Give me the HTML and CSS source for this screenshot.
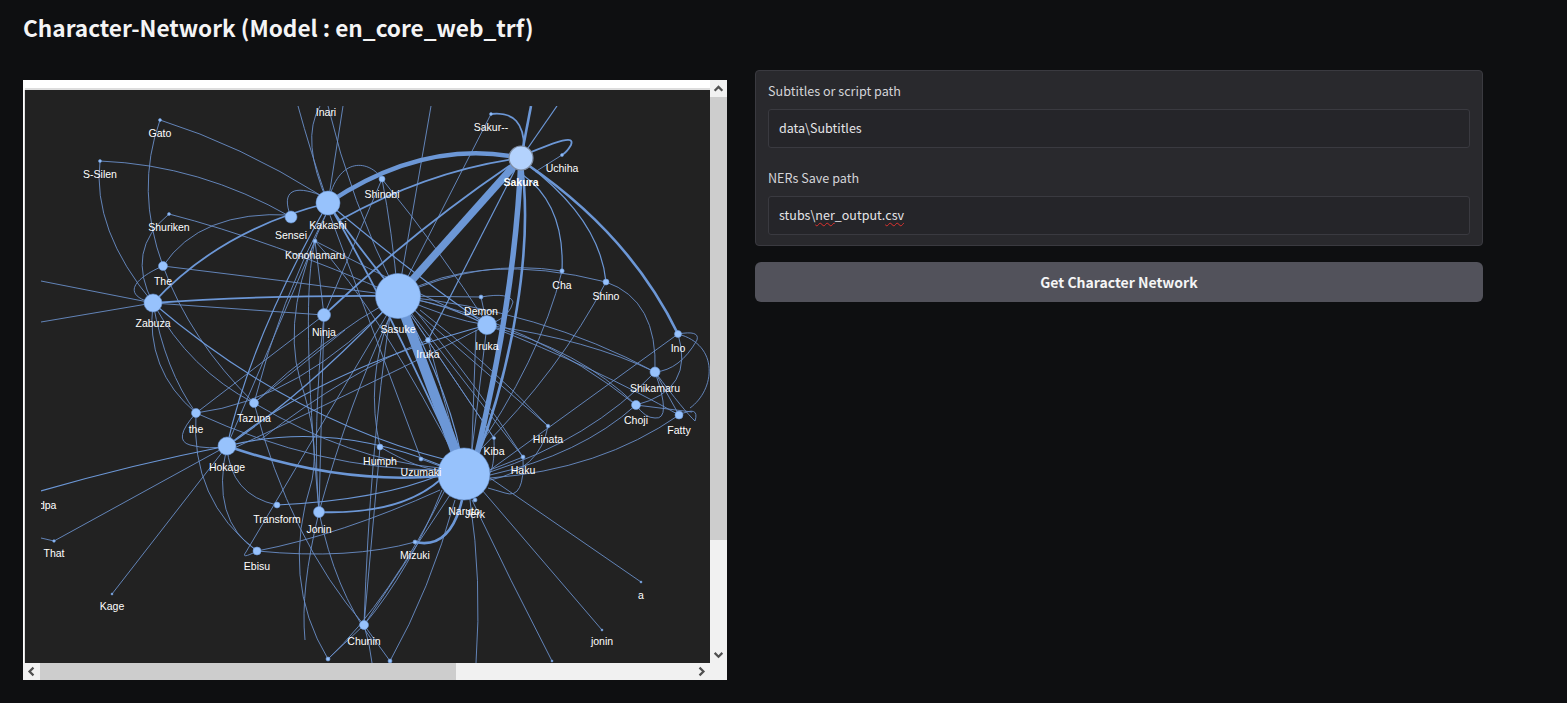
FILE: index.html
```html
<!DOCTYPE html>
<html lang="en">
<head>
<meta charset="utf-8">
<title>Character-Network</title>
<link rel="stylesheet" href="styles.css">
</head>
<body>
<header class="title-bar"><h1 class="title">Character-Network (Model : en_core_web_trf)</h1></header>
<main class="columns">
  <section class="frame">
    <div class="viewport">
      <svg class="graph" viewBox="25 90 685 573" width="685" height="573" xmlns="http://www.w3.org/2000/svg">
        <defs><clipPath id="stage"><rect x="41" y="106" width="669" height="557"/></clipPath></defs>
        <g clip-path="url(#stage)">
          <g class="edges e1">
            <path d="M160 120Q240 145 320 195"/><path d="M160 120Q135 190 163 266"/><path d="M100 161Q200 165 291 217"/><path d="M100 161Q92 230 153 303"/>
            <path d="M169 214Q270 240 398 296"/><path d="M169 214Q125 250 153 303"/><path d="M163 266Q200 210 291 215"/><path d="M163 266Q280 280 398 296"/>
            <path d="M163 266C135 278 120 295 153 303"/><path d="M153 303L41 281"/><path d="M153 303L41 322"/><path d="M153 303Q145 370 196 413"/>
            <path d="M153 303Q165 370 196 413"/><path d="M163 266Q190 340 254 403"/><path d="M153 303Q190 370 254 403"/><path d="M153 303L324 315"/>
            <path d="M328 203Q310 150 298 106"/><path d="M328 203Q300 140 320 106"/><path d="M343 106L328 203"/><path d="M328 106Q350 200 398 296"/><path d="M431 106L398 296"/>
            <path d="M328 203C338 155 370 160 382 179"/><path d="M291 217C280 190 295 185 320 195"/><path d="M382 179Q440 250 488 325"/><path d="M382 179Q392 230 398 296"/><path d="M382 179L324 315"/>
            <path d="M491 114L398 296"/><path d="M562 155L535 172"/><path d="M562 271Q480 258 398 296"/><path d="M606 282Q480 250 398 296"/><path d="M606 282Q658 300 655 372"/>
            <path d="M562 271Q540 360 470 460"/><path d="M606 282Q560 370 480 450"/><path d="M481 297Q510 292 513 302Q510 315 495 322"/><path d="M481 297L398 296"/><path d="M481 297L487 325"/>
            <path d="M398 296Q540 310 655 372"/><path d="M398 296Q530 320 636 405"/><path d="M487 325Q590 340 655 372"/><path d="M487 325Q580 350 636 405"/><path d="M487 325Q600 370 679 415"/>
            <path d="M398 296Q450 305 487 325"/><path d="M398 296Q450 320 487 325"/><path d="M398 296L548 426"/><path d="M398 296L523 457"/><path d="M398 296L494 438"/>
            <path d="M490 470L678 334"/><path d="M490 472Q590 440 655 372"/><path d="M490 475Q580 455 636 405"/><path d="M490 478Q600 470 679 415"/>
            <path d="M678 334Q700 330 697 340Q680 370 655 372"/><path d="M678 334C720 345 715 390 690 408"/><path d="M678 334Q695 390 636 405"/><path d="M655 372L679 415"/>
            <path d="M655 372Q672 420 655 418Q645 418 636 405"/><path d="M636 405L692 412"/><path d="M679 415Q700 405 695 421Q685 412 655 372"/>
            <path d="M490 478L641 582"/><path d="M482 490L602 630"/><path d="M472 500Q510 580 552 661"/><path d="M470 500Q482 580 476 663"/><path d="M455 500Q430 590 390 661"/>
            <path d="M450 495L364 625"/><path d="M442 490Q410 570 364 625"/><path d="M445 490Q390 600 328 659"/><path d="M257 551Q340 535 440 490"/><path d="M257 551Q350 560 415 542"/>
            <path d="M227 446Q230 495 277 505"/><path d="M227 446Q210 520 257 551"/><path d="M196 413Q190 500 257 551"/><path d="M227 446L54 541"/><path d="M54 541L41 538"/><path d="M227 446L112 594"/>
            <path d="M196 413Q172 440 190 445Q210 450 227 446"/><path d="M196 413Q320 470 440 470"/><path d="M196 413L324 315"/><path d="M196 413Q300 400 398 296"/>
            <path d="M257 551Q240 560 246 552L398 296"/><path d="M254 403Q290 540 364 625"/><path d="M254 403Q350 460 440 468"/><path d="M254 403Q320 340 398 296"/><path d="M254 403L345 330"/><path d="M254 403Q280 300 328 210"/>
            <path d="M319 512L324 315"/><path d="M319 512Q350 400 390 316"/><path d="M319 512Q312 430 324 315"/><path d="M328 659Q280 580 312 480Q320 440 300 380Q280 310 328 210"/><path d="M364 625L328 659"/><path d="M364 625L380 447"/>
            <path d="M364 625Q370 450 390 316"/><path d="M364 625L390 661"/><path d="M364 625Q370 645 372 663"/><path d="M380 447Q365 380 390 316"/><path d="M380 447Q420 470 440 470"/><path d="M421 459L328 210"/><path d="M421 459L445 468"/>
            <path d="M548 426Q485 360 420 310"/><path d="M548 426Q540 470 490 480"/><path d="M494 438L398 296"/><path d="M494 438Q495 470 488 475"/><path d="M523 457Q525 500 505 493Q495 490 488 488"/>
            <path d="M523 457Q480 390 415 310"/><path d="M523 457L490 470"/><path d="M428 340Q350 370 260 440"/><path d="M428 340L464 474"/><path d="M487 325Q400 370 230 450"/>
            <path d="M315 241Q430 300 487 325"/><path d="M315 241Q380 310 464 474"/><path d="M315 241L324 315"/><path d="M315 241Q300 300 319 512"/><path d="M315 241L227 446"/>
            <path d="M319 512Q335 590 372 640"/><path d="M319 512Q300 590 305 640"/><path d="M487 325L472 450"/><path d="M470 500L476 330"/>
          </g>
          <g class="edges e2">
            <path d="M227 446Q130 465 41 491"/><path d="M227 446Q250 340 328 203"/><path d="M227 446Q320 370 487 325"/><path d="M227 446Q310 390 398 296"/><path d="M153 303Q290 420 447 460"/>
            <path d="M277 505Q380 500 440 475"/><path d="M523 175Q565 205 562 271"/><path d="M528 165Q600 220 606 282"/><path d="M521 158L557 106"/><path d="M398 296Q455 400 464 474"/>
            <path d="M227 446Q330 420 440 465"/><path d="M328 203Q420 280 487 325"/><path d="M428 340L515 170"/>
          </g>
          <g class="edges e3">
            <path d="M153 303Q220 230 328 203"/><path d="M153 303Q260 295 398 296"/><path d="M324 315Q420 225 521 158"/><path d="M491 114Q525 110 524 150"/><path d="M524 155C560 140 575 135 571 145Q567 152 562 155"/>
            <path d="M328 203Q345 230 398 296"/><path d="M319 512Q400 515 440 480"/><path d="M328 203Q380 290 455 455"/><path d="M340 220Q430 170 521 158"/>
          </g>
          <g class="edges e4">
            <path d="M528 165Q630 235 678 334"/><path d="M521 158L531 106"/><path d="M227 446Q340 485 440 476"/><path d="M415 542Q450 550 462 500"/><path d="M521 158C535 250 510 370 478 455"/>
          </g>
          <path class="edges e5" d="M328 203Q425 138 521 158"/>
          <path class="edges e6" d="M521 158Q515 300 473 470"/>
          <path class="edges e7" d="M398 296L521 158"/>
          <path class="edges e8" d="M398 296Q425 370 464 474"/>
          <g class="nodes">
            <circle cx="464" cy="474" r="26"/><circle cx="398" cy="296" r="22.5"/><circle class="lit" cx="521" cy="158" r="12"/><circle cx="328" cy="203" r="12"/>
            <circle cx="291" cy="217" r="6"/><circle cx="153" cy="303" r="9"/><circle cx="163" cy="266" r="4.5"/><circle cx="324" cy="315" r="6.5"/>
            <circle cx="487" cy="325" r="9.5"/><circle cx="227" cy="446" r="9"/><circle cx="196" cy="413" r="4.5"/><circle cx="254" cy="403" r="4.5"/>
            <circle cx="655" cy="372" r="5"/><circle cx="636" cy="405" r="4.5"/><circle cx="679" cy="415" r="4"/><circle cx="678" cy="334" r="3.5"/>
            <circle cx="606" cy="282" r="3"/><circle cx="562" cy="271" r="2.2"/><circle cx="319" cy="512" r="5.5"/><circle cx="277" cy="505" r="3"/>
            <circle cx="257" cy="551" r="4"/><circle cx="364" cy="625" r="4.5"/><circle cx="415" cy="542" r="2"/><circle cx="380" cy="447" r="3"/>
            <circle cx="421" cy="459" r="2"/><circle cx="494" cy="438" r="1.6"/><circle cx="523" cy="457" r="2"/><circle cx="548" cy="426" r="1.8"/>
            <circle cx="475" cy="500" r="2"/><circle cx="428" cy="340" r="2.5"/><circle cx="481" cy="297" r="2"/><circle cx="382" cy="179" r="3"/>
            <circle cx="562" cy="155" r="1.5"/><circle cx="491" cy="114" r="1.5"/><circle cx="160" cy="120" r="1.5"/><circle cx="100" cy="161" r="1.5"/>
            <circle cx="169" cy="214" r="1.5"/><circle cx="315" cy="241" r="2"/><circle cx="54" cy="541" r="1.3"/><circle cx="112" cy="594" r="1"/>
            <circle cx="641" cy="582" r="1"/><circle cx="602" cy="630" r="1"/><circle cx="328" cy="659" r="2"/><circle cx="390" cy="661" r="2"/><circle cx="552" cy="661" r="1"/>
          </g>
          <g class="labels">
            <text x="326" y="116">Inari</text><text x="160" y="137">Gato</text><text x="100" y="178">S-Silen</text><text x="169" y="231">Shuriken</text>
            <text x="291" y="239">Sensei</text><text x="328" y="229">Kakashi</text><text x="315" y="259">Konohamaru</text><text x="382" y="198">Shinobi</text>
            <text x="491" y="131">Sakur--</text><text x="562" y="172">Uchiha</text><text x="521" y="186" class="strong">Sakura</text><text x="163" y="285">The</text>
            <text x="153" y="327">Zabuza</text><text x="324" y="336">Ninja</text><text x="398" y="333">Sasuke</text><text x="428" y="358">Iruka</text>
            <text x="481" y="315">Demon</text><text x="487" y="350">Iruka</text><text x="562" y="289">Cha</text><text x="606" y="300">Shino</text>
            <text x="678" y="352">Ino</text><text x="655" y="392">Shikamaru</text><text x="636" y="424">Choji</text><text x="679" y="434">Fatty</text>
            <text x="196" y="433">the</text><text x="254" y="422">Tazuna</text><text x="227" y="471">Hokage</text><text x="380" y="465">Humph</text>
            <text x="421" y="476">Uzumaki</text><text x="494" y="455">Kiba</text><text x="548" y="443">Hinata</text><text x="523" y="474">Haku</text>
            <text x="464" y="515">Naruto</text><text x="475" y="518">Jerk</text><text x="36" y="509">Grandpa</text><text x="54" y="557">That</text>
            <text x="112" y="610">Kage</text><text x="277" y="523">Transform</text><text x="319" y="533">Jonin</text><text x="257" y="570">Ebisu</text>
            <text x="415" y="559">Mizuki</text><text x="364" y="645">Chunin</text><text x="641" y="599">a</text><text x="602" y="645">jonin</text>
          </g>
        </g>
      </svg>
    </div>
    <div class="scroll-v">
      <div class="arrow"><svg class="chev" viewBox="0 0 10 10"><path d="M1.5 7L5 3.5L8.5 7"/></svg></div>
      <div class="thumb-v"></div>
      <div class="track"></div>
      <div class="arrow"><svg class="chev" viewBox="0 0 10 10"><path d="M1.5 3.5L5 7L8.5 3.5"/></svg></div>
    </div>
    <div class="scroll-h">
      <div class="arrow"><svg class="chev" viewBox="0 0 10 10"><path d="M6.8 1.5L3.2 5L6.8 8.5"/></svg></div>
      <div class="thumb-h"></div>
      <div class="track"></div>
      <div class="arrow"><svg class="chev" viewBox="0 0 10 10"><path d="M3.2 1.5L6.8 5L3.2 8.5"/></svg></div>
    </div>
    <div class="corner"></div>
  </section>
  <section class="side">
    <div class="panel">
      <div class="field">
        <div class="field-label">Subtitles or script path</div>
        <div class="field-input">data\Subtitles</div>
      </div>
      <div class="field">
        <div class="field-label">NERs Save path</div>
        <div class="field-input">stubs\<span class="typo">ner</span>_output.<span class="typo">csv</span></div>
      </div>
    </div>
    <button class="action" type="button">Get Character Network</button>
  </section>
</main>
</body>
</html>
```
FILE: styles.css
```css
* { box-sizing: border-box; }
html, body { height: 100%; }
body {
  margin: 0;
  overflow: hidden;
  background: #0e0f11;
  color: #f4f4f5;
  font-family: "Noto Sans CJK JP", "Noto Sans", sans-serif;
}
.title-bar { padding: 11px 23px 0; height: 70px; }
.title { margin: 0; font-size: 22.6px; font-weight: 700; line-height: 34px; color: #f4f4f5; }
.columns { display: flex; align-items: flex-start; padding-left: 23px; gap: 28px; }

.frame {
  display: grid;
  grid-template-columns: 687px 17px;
  grid-template-rows: 583px 17px;
  margin-top: 10px;
  background: #fff;
}
.viewport { padding: 10px 0 0 2px; background: #fff; overflow: hidden; position: relative; }
.graph { display: block; background: #222; box-shadow: 0 -2px 0 #ddd, -1px 0 0 #ddd; }
.edges { fill: none; stroke: #6c97d6; stroke-linecap: butt; }
.e1 { stroke-width: 0.9; stroke: #6a8fc8; }
.e2 { stroke-width: 1.2; }
.e3 { stroke-width: 1.8; }
.e4 { stroke-width: 2.6; }
.e5 { stroke-width: 4.5; }
.e6 { stroke-width: 5.5; }
.e7 { stroke-width: 7.5; }
.e8 { stroke-width: 10; }
.nodes circle { fill: #97c2fc; stroke: #6c97d6; stroke-width: 0.6; }
.nodes .lit { fill: #b3d2fd; stroke: #7f8da3; stroke-width: 1.2; }
.labels text { fill: #fff; font-family: "Liberation Sans", Arial, sans-serif; font-size: 10.5px; text-anchor: middle; }
.labels .strong { font-weight: 700; }

.scroll-v { display: flex; flex-direction: column; background: #f1f1f1; }
.scroll-h { display: flex; background: #f1f1f1; }
.arrow { flex: 0 0 17px; height: 17px; display: flex; align-items: center; justify-content: center; }
.chev { width: 11px; height: 11px; fill: none; stroke: #505050; stroke-width: 2; }
.thumb-v { height: 443px; background: #cdcdcd; }
.thumb-h { width: 416px; background: #cdcdcd; }
.track { flex: 1; }
.corner { background: #f1f1f1; }

.side { width: 728px; display: flex; flex-direction: column; gap: 16px; }
.panel {
  display: flex;
  flex-direction: column;
  gap: 21px;
  padding: 11px 12px 10px;
  height: 176px;
  background: #29292d;
  border: 1px solid #3a3a40;
  border-radius: 4px;
}
.field { display: flex; flex-direction: column; gap: 9px; }
.field-label { font-size: 12.6px; line-height: 18px; color: #d4d4d8; }
.field-input {
  height: 39px;
  padding: 0 10px 2px;
  display: flex;
  align-items: center;
  white-space: pre;
  font-size: 12.5px;
  color: #e4e4e7;
  background: #252529;
  border: 1px solid #3a3a40;
  border-radius: 3px;
}
.typo { text-decoration: underline wavy #e0322e 1px; text-underline-offset: 2px; }
.action {
  height: 40px;
  border: 0;
  border-radius: 6px;
  background: #52525b;
  color: #f4f4f5;
  font-family: inherit;
  font-size: 14px;
  font-weight: 700;
}
```
